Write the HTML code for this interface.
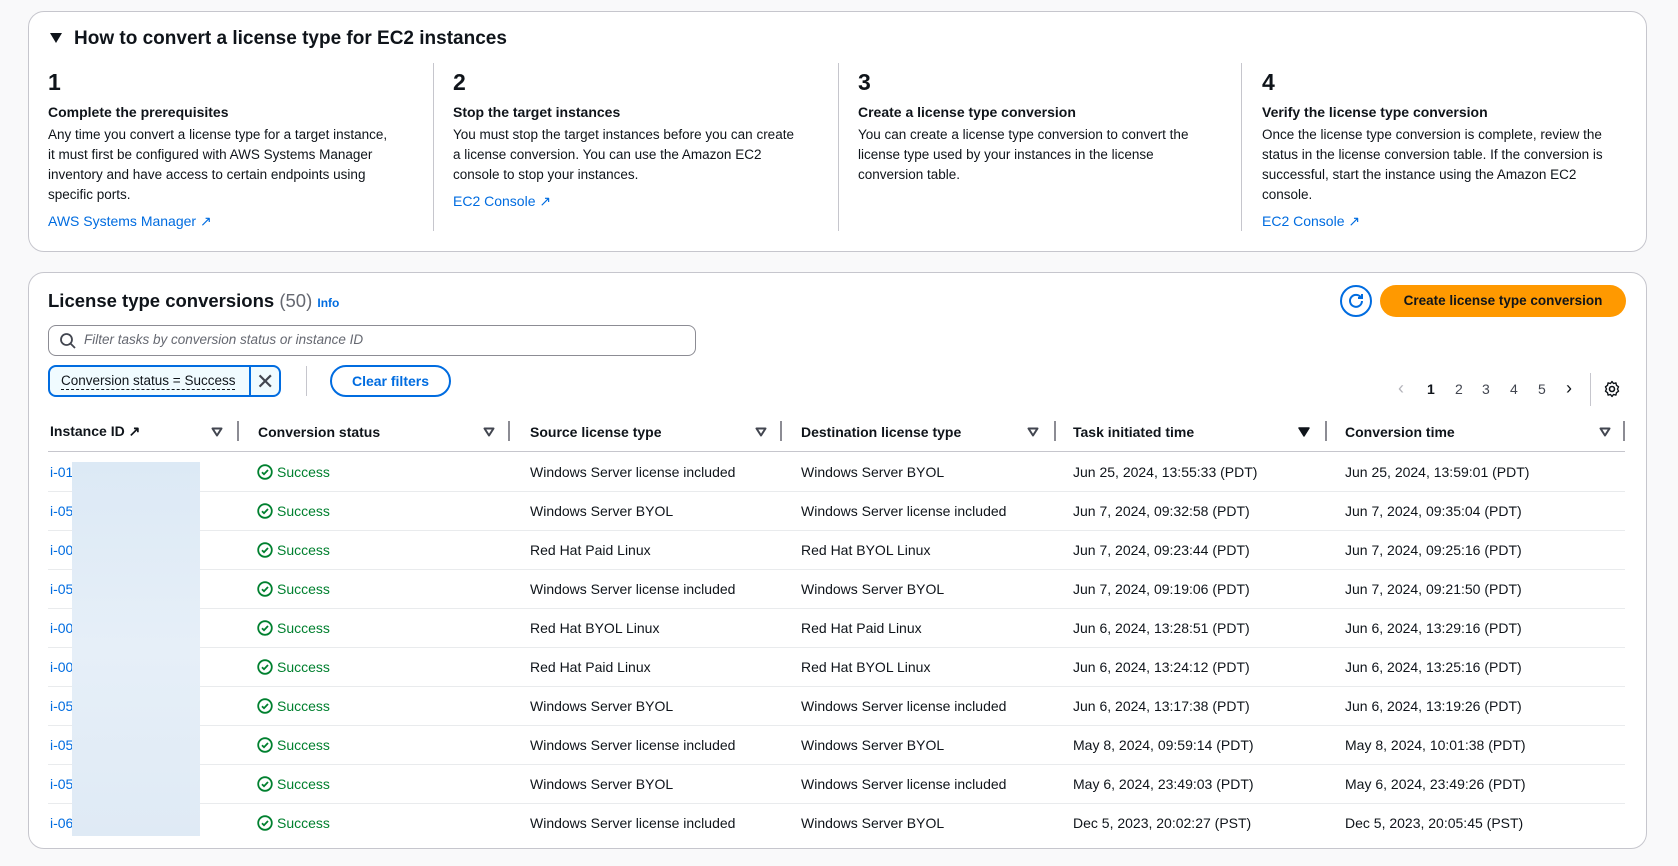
<!DOCTYPE html>
<html><head><meta charset="utf-8"><style>
*{box-sizing:border-box;margin:0;padding:0}
body{width:1678px;height:866px;background:#f9f9fa;font-family:"Liberation Sans",sans-serif;color:#0f141a;position:relative;overflow:hidden;font-size:14px}
.a{position:absolute;white-space:nowrap}
.card{position:absolute;left:28px;width:1619px;background:#fff;border:1px solid #c6c6cd;border-radius:16px}
.lnk{color:#006ce0}
.b{font-weight:bold}
.num{font-size:23px;font-weight:bold}
.body{font-size:13.5px;line-height:20px;color:#0f141a}
.vd{position:absolute;width:1px;background:#c6c6cd}
.hd{font-weight:bold;font-size:14px}
.fi{position:absolute;width:12px;height:10px}
.rl{position:absolute;left:48px;width:1577px;height:1px;background:#e9ebed}
</style></head><body>
<div class="card" style="top:11px;height:241px"></div>
<svg class="a" style="left:49px;top:32px" width="14" height="12" viewBox="0 0 14 12"><path d="M1 1h12L7 11z" fill="#0f141a"/></svg>
<div class="a b" style="left:74px;top:28px;font-size:19px">How to convert a license type for EC2 instances</div>
<div class="vd" style="left:433px;top:63px;height:168px"></div>
<div class="vd" style="left:838px;top:63px;height:168px"></div>
<div class="vd" style="left:1241px;top:63px;height:168px"></div>

<div class="a num" style="left:48px;top:69px">1</div>
<div class="a b" style="left:48px;top:104px">Complete the prerequisites</div>
<div class="a body" style="left:48px;top:125px">Any time you convert a license type for a target instance,<br>it must first be configured with AWS Systems Manager<br>inventory and have access to certain endpoints using<br>specific ports.</div>
<div class="a lnk" style="left:48px;top:213px">AWS Systems Manager &#8599;</div>

<div class="a num" style="left:453px;top:69px">2</div>
<div class="a b" style="left:453px;top:104px">Stop the target instances</div>
<div class="a body" style="left:453px;top:125px">You must stop the target instances before you can create<br>a license conversion. You can use the Amazon EC2<br>console to stop your instances.</div>
<div class="a lnk" style="left:453px;top:193px">EC2 Console &#8599;</div>

<div class="a num" style="left:858px;top:69px">3</div>
<div class="a b" style="left:858px;top:104px">Create a license type conversion</div>
<div class="a body" style="left:858px;top:125px">You can create a license type conversion to convert the<br>license type used by your instances in the license<br>conversion table.</div>

<div class="a num" style="left:1262px;top:69px">4</div>
<div class="a b" style="left:1262px;top:104px">Verify the license type conversion</div>
<div class="a body" style="left:1262px;top:125px">Once the license type conversion is complete, review the<br>status in the license conversion table. If the conversion is<br>successful, start the instance using the Amazon EC2<br>console.</div>
<div class="a lnk" style="left:1262px;top:213px">EC2 Console &#8599;</div>

<div class="card" style="top:272px;height:577px"></div>
<div class="a" style="left:48px;top:290px;font-size:18.5px"><span class="b">License type conversions</span> <span style="color:#656871">(50)</span> <span class="lnk b" style="font-size:12px">Info</span></div>
<div class="a" style="left:1340px;top:285px;width:32px;height:32px;border:2px solid #006ce0;border-radius:50%"></div>
<svg class="a" style="left:1346px;top:291px" width="20" height="20" viewBox="0 0 20 20"><path d="M15 6.5A6 6 0 1 0 16 10" fill="none" stroke="#006ce0" stroke-width="2"/><path d="M16 3v4h-4" fill="none" stroke="#006ce0" stroke-width="2"/></svg>
<div class="a b" style="left:1380px;top:285px;width:246px;height:32px;background:#ff9900;border-radius:16px;text-align:center;line-height:32px;font-size:13.5px">Create license type conversion</div>

<div class="a" style="left:48px;top:325px;width:648px;height:31px;border:1px solid #8c8c94;border-radius:8px"></div>
<svg class="a" style="left:59px;top:332px" width="18" height="18" viewBox="0 0 18 18"><circle cx="7.5" cy="7.5" r="5.5" fill="none" stroke="#424650" stroke-width="1.8"/><path d="M11.5 11.5L16 16" stroke="#424650" stroke-width="1.8"/></svg>
<div class="a" style="left:84px;top:332px;font-style:italic;color:#656871;font-size:13.5px">Filter tasks by conversion status or instance ID</div>

<div class="a" style="left:48px;top:365px;width:233px;height:32px;border:2px solid #006ce0;border-radius:8px;background:#f0fbff"></div>
<div class="a" style="left:249px;top:365px;width:2px;height:32px;background:#006ce0"></div>
<div class="a" style="left:61px;top:373px;border-bottom:1px dashed #0f141a;line-height:16px;font-size:13.5px">Conversion status = Success</div>
<div class="a" style="left:256px;top:369px;font-size:22px;color:#424650">&#10005;</div>
<div class="vd" style="left:306px;top:366px;height:30px"></div>
<div class="a b lnk" style="left:330px;top:365px;width:121px;height:32px;border:2px solid #006ce0;border-radius:16px;text-align:center;line-height:28px">Clear filters</div>

<div class="a" style="left:1398px;top:378px;color:#b4b4bb;font-size:18px">&#8249;</div>
<div class="a b" style="left:1427px;top:381px">1</div>
<div class="a" style="left:1455px;top:381px;color:#424650">2</div>
<div class="a" style="left:1482px;top:381px;color:#424650">3</div>
<div class="a" style="left:1510px;top:381px;color:#424650">4</div>
<div class="a" style="left:1538px;top:381px;color:#424650">5</div>
<div class="a" style="left:1566px;top:378px;color:#0f141a;font-size:18px">&#8250;</div>
<div class="vd" style="left:1590px;top:373px;height:33px"></div>
<svg class="a" style="left:1603px;top:380px" width="18" height="18" viewBox="0 0 18 18"><circle cx="9" cy="9" r="2.5" fill="none" stroke="#0f141a" stroke-width="1.6"/><path d="M9 1.5l1.5 2 2.4-.6.6 2.4 2 1.5-1 2.2 1 2.2-2 1.5-.6 2.4-2.4-.6-1.5 2-1.5-2-2.4.6-.6-2.4-2-1.5 1-2.2-1-2.2 2-1.5.6-2.4 2.4.6z" fill="none" stroke="#0f141a" stroke-width="1.4" stroke-linejoin="round"/></svg>

<div class="a hd" style="left:50px;top:423px">Instance ID &#8599;</div>
<div class="a hd" style="left:258px;top:424px">Conversion status</div>
<div class="a hd" style="left:530px;top:424px">Source license type</div>
<div class="a hd" style="left:801px;top:424px">Destination license type</div>
<div class="a hd" style="left:1073px;top:424px">Task initiated time</div>
<div class="a hd" style="left:1345px;top:424px">Conversion time</div>
<svg class="fi" style="left:211px;top:427px" viewBox="0 0 12 10"><path d="M1.5 1.5h9L6 8.5z" fill="none" stroke="#424650" stroke-width="2" stroke-linejoin="round"/></svg>
<svg class="fi" style="left:483px;top:427px" viewBox="0 0 12 10"><path d="M1.5 1.5h9L6 8.5z" fill="none" stroke="#424650" stroke-width="2" stroke-linejoin="round"/></svg>
<svg class="fi" style="left:755px;top:427px" viewBox="0 0 12 10"><path d="M1.5 1.5h9L6 8.5z" fill="none" stroke="#424650" stroke-width="2" stroke-linejoin="round"/></svg>
<svg class="fi" style="left:1027px;top:427px" viewBox="0 0 12 10"><path d="M1.5 1.5h9L6 8.5z" fill="none" stroke="#424650" stroke-width="2" stroke-linejoin="round"/></svg>
<svg class="fi" style="left:1298px;top:427px" viewBox="0 0 12 10"><path d="M1 1h10L6 9z" fill="#0f141a" stroke="#0f141a" stroke-width="1.5" stroke-linejoin="round"/></svg>
<svg class="fi" style="left:1599px;top:427px" viewBox="0 0 12 10"><path d="M1.5 1.5h9L6 8.5z" fill="none" stroke="#424650" stroke-width="2" stroke-linejoin="round"/></svg>
<div class="vd" style="left:237px;top:421px;height:20px;width:2px;background:#8c8c94"></div>
<div class="vd" style="left:508px;top:421px;height:20px;width:2px;background:#8c8c94"></div>
<div class="vd" style="left:780px;top:421px;height:20px;width:2px;background:#8c8c94"></div>
<div class="vd" style="left:1054px;top:421px;height:20px;width:2px;background:#8c8c94"></div>
<div class="vd" style="left:1325px;top:421px;height:20px;width:2px;background:#8c8c94"></div>
<div class="vd" style="left:1623px;top:421px;height:20px;width:2px;background:#8c8c94"></div>
<div class="rl" style="top:451px;background:#c6c6cd"></div>

<div id="rows"></div>
<script>
var d=[["i-01","Windows Server license included","Windows Server BYOL","Jun 25, 2024, 13:55:33 (PDT)","Jun 25, 2024, 13:59:01 (PDT)"],
["i-05","Windows Server BYOL","Windows Server license included","Jun 7, 2024, 09:32:58 (PDT)","Jun 7, 2024, 09:35:04 (PDT)"],
["i-00","Red Hat Paid Linux","Red Hat BYOL Linux","Jun 7, 2024, 09:23:44 (PDT)","Jun 7, 2024, 09:25:16 (PDT)"],
["i-05","Windows Server license included","Windows Server BYOL","Jun 7, 2024, 09:19:06 (PDT)","Jun 7, 2024, 09:21:50 (PDT)"],
["i-00","Red Hat BYOL Linux","Red Hat Paid Linux","Jun 6, 2024, 13:28:51 (PDT)","Jun 6, 2024, 13:29:16 (PDT)"],
["i-00","Red Hat Paid Linux","Red Hat BYOL Linux","Jun 6, 2024, 13:24:12 (PDT)","Jun 6, 2024, 13:25:16 (PDT)"],
["i-05","Windows Server BYOL","Windows Server license included","Jun 6, 2024, 13:17:38 (PDT)","Jun 6, 2024, 13:19:26 (PDT)"],
["i-05","Windows Server license included","Windows Server BYOL","May 8, 2024, 09:59:14 (PDT)","May 8, 2024, 10:01:38 (PDT)"],
["i-05","Windows Server BYOL","Windows Server license included","May 6, 2024, 23:49:03 (PDT)","May 6, 2024, 23:49:26 (PDT)"],
["i-06","Windows Server license included","Windows Server BYOL","Dec 5, 2023, 20:02:27 (PST)","Dec 5, 2023, 20:05:45 (PST)"]];
var h="";
d.forEach(function(r,i){var c=472+i*39,t=c-8;
h+='<div class="a lnk" style="left:50px;top:'+t+'px">'+r[0]+'</div>';
h+='<svg class="a" style="left:257px;top:'+(c-8)+'px" width="16" height="16" viewBox="0 0 16 16"><circle cx="8" cy="8" r="6.8" fill="none" stroke="#00802f" stroke-width="1.8"/><path d="M5 8.2l2 2 4-4.2" fill="none" stroke="#00802f" stroke-width="1.8"/></svg>';
h+='<div class="a" style="left:277px;top:'+t+'px;color:#00802f">Success</div>';
h+='<div class="a" style="left:530px;top:'+t+'px">'+r[1]+'</div>';
h+='<div class="a" style="left:801px;top:'+t+'px">'+r[2]+'</div>';
h+='<div class="a" style="left:1073px;top:'+t+'px">'+r[3]+'</div>';
h+='<div class="a" style="left:1345px;top:'+t+'px">'+r[4]+'</div>';
if(i<9)h+='<div class="rl" style="top:'+(c+19)+'px"></div>';});
h+='<div class="a" style="left:72px;top:462px;width:128px;height:374px;background:linear-gradient(180deg,#dce9f5,#e6eff8 50%,#dfeaf5)"></div>';
document.getElementById("rows").innerHTML=h;
</script>
</body></html>
